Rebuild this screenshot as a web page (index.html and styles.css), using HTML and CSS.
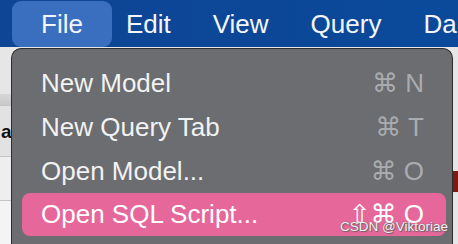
FILE: index.html
```html
<!DOCTYPE html>
<html lang="en">
<head>
    <meta charset="UTF-8">
    <title>File menu</title>
    <link rel="stylesheet" href="styles.css">
</head>
<body>
    <div class="menubar">
        <span class="menubar-item active">File</span>
        <span class="menubar-item">Edit</span>
        <span class="menubar-item">View</span>
        <span class="menubar-item">Query</span>
        <span class="menubar-item">Da</span>
    </div>

    <div class="backdrop">
        <div class="side left">
            <div class="band light"></div>
            <div class="band toolbar"></div>
            <div class="band cell"><b>a</b></div>
            <div class="band cell pale"></div>
            <div class="band cell paler"></div>
        </div>
        <div class="side right">
            <div class="band light tall"></div>
            <div class="band red"></div>
            <div class="band light"></div>
        </div>
    </div>

    <div class="menu">
        <div class="menu-item">
            <span>New Model</span>
            <span class="shortcut">⌘ N</span>
        </div>
        <div class="menu-item">
            <span>New Query Tab</span>
            <span class="shortcut">⌘ T</span>
        </div>
        <div class="menu-item">
            <span>Open Model...</span>
            <span class="shortcut">⌘ O</span>
        </div>
        <div class="menu-item selected">
            <span>Open SQL Script...</span>
            <span class="shortcut">⇧⌘ O</span>
        </div>
    </div>

    <div class="watermark">CSDN @Viktoriae</div>
</body>
</html>
```

FILE: styles.css
```css
* { margin: 0; padding: 0; box-sizing: border-box; }
html, body { width: 458px; height: 244px; overflow: hidden; }
body {
    font-family: "Liberation Sans", Arial, "DejaVu Sans", sans-serif;
    background: #e8e8e8;
    position: relative;
}

/* top menu bar */
.menubar {
    height: 47px;
    background: linear-gradient(90deg, #0f4595 0%, #0c4797 60%, #0b4a9b 100%);
    display: flex;
    align-items: stretch;
    padding: 1px 0 0 12px;
    gap: 42px;
    overflow: hidden;
    white-space: nowrap;
}
.menubar-item {
    color: #f4f6fa;
    font-size: 26px;
    line-height: 46px;
    flex-shrink: 0;
}
.menubar-item:first-child { margin-left: 29px; }
.menubar-item.active {
    background: #3a6fc0;
    border-radius: 9px;
    padding: 0 29px;
    margin: 0 -28px 0 0;
}

/* window behind the menu */
.backdrop {
    height: 197px;
    display: flex;
    justify-content: space-between;
}
.side { width: 12px; display: flex; flex-direction: column; }
.side.right { width: 6px; }
.band { border-bottom: 1px solid #c4c4c4; }
.band.light { height: 55px; background: #e6e6e6; border: none; }
.band.tall { height: 135px; }
.band.toolbar { height: 14px; background: linear-gradient(#d6d6d6, #c8c8c8); }
.band.cell { height: 51px; background: #e2e2e2; font-size: 19px; line-height: 52px; color: #111; }
.band.cell b { margin-left: 1px; }
.band.pale { background: #eeeeee; }
.band.paler { background: #f4f4f4; border: none; }
.band.red { height: 24px; background: #7d1a14; border-bottom: 1px solid #e0e0e0; }

/* dropdown */
.menu {
    position: absolute;
    left: 11px;
    top: 48px;
    width: 442px;
    height: 196px;
    background: #6b6d70;
    border: 1px solid #2c2c2e;
    border-bottom: none;
    border-radius: 10px 10px 0 0;
    padding: 12px 6px 0 10px;
}
.menu-item {
    height: 44px;
    display: flex;
    justify-content: space-between;
    align-items: center;
    padding: 0 22px 0 19px;
    font-size: 26px;
    color: #f2f2f2;
    border-radius: 8px;
}
.menu-item.selected {
    height: 43px;
    background: #e6679a;
    color: #fff;
}
.shortcut { color: #a9abae; }
.menu-item.selected .shortcut { color: #fff; }

.watermark {
    position: absolute;
    left: 340px;
    top: 219px;
    font-size: 13.5px;
    color: #f4f4f4;
    text-shadow: 0 0 1px #555, 1px 1px 1px #666;
}
```
